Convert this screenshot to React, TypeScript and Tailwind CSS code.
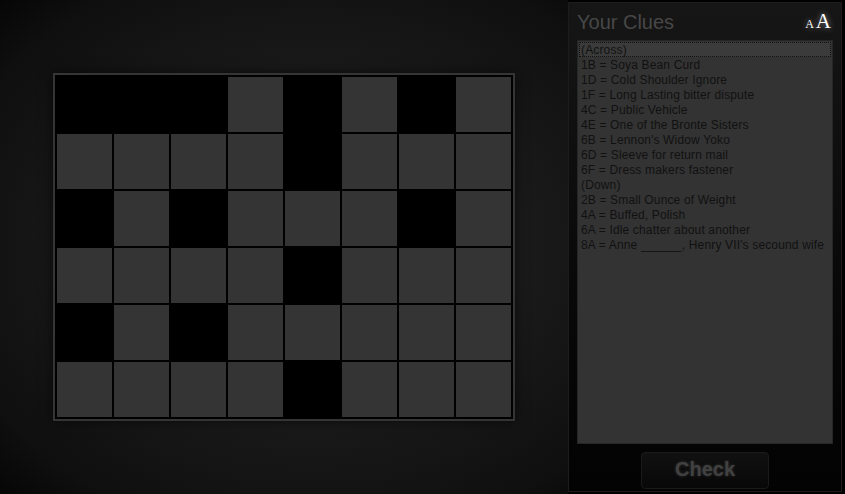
import { useState } from 'react';

const LAYOUT = [
  'BBBWBWBW',
  'WWWWBWWW',
  'BWBWWWBW',
  'WWWWBWWW',
  'BWBWWWWW',
  'WWWWBWWW',
];

const CLUES = [
  '(Across)',
  '1B = Soya Bean Curd',
  '1D = Cold Shoulder Ignore',
  '1F = Long Lasting bitter dispute',
  '4C = Public Vehicle',
  '4E = One of the Bronte Sisters',
  "6B = Lennon's Widow Yoko",
  '6D = Sleeve for return mail',
  '6F = Dress makers fastener',
  '(Down)',
  '2B = Small Ounce of Weight',
  '4A = Buffed, Polish',
  '6A = Idle chatter about another',
  "8A = Anne ______, Henry VII's secound wife",
];

function Board() {
  return (
    <div className="border-2 border-[#353535] bg-black p-[2px] shadow-[0_0_12px_rgba(0,0,0,0.6)]">
      <div className="grid grid-cols-[repeat(8,55px)] grid-rows-[repeat(6,55px)] gap-[2px]">
        {LAYOUT.flatMap((row, r) =>
          row.split('').map((c, i) => (
            <div
              key={`${r}-${i}`}
              className={c === 'W' ? 'bg-[#343434]' : 'bg-black'}
            />
          ))
        )}
      </div>
    </div>
  );
}

function CluePanel() {
  const [active] = useState(0);

  return (
    <aside className="w-[274px] h-[490px] mt-[2px] border border-[#1c1c1c] bg-gradient-to-b from-[#161616] via-[#0a0a0a] to-[#030303] flex flex-col">
      <div className="flex items-end justify-between h-[37px] pl-[8px] pr-[10px]">
        <h2 className="text-[20px] leading-none pb-[8px] text-[#474747] font-['Liberation_Sans',Arial,sans-serif]">
          Your Clues
        </h2>
        <div className="flex items-baseline pb-[8px] font-['Liberation_Serif',serif] text-white [text-shadow:0_0_6px_rgba(255,255,255,0.55)]">
          <span className="text-[12px] leading-none mr-[2px]">A</span>
          <span className="text-[21px] leading-none">A</span>
        </div>
      </div>

      <ul className="mx-[8px] h-[404px] bg-[#333333] border border-[#262626] pt-[1px] px-[1px] font-['Liberation_Sans',Arial,sans-serif] text-[12px] leading-[15px] tracking-[0.15px] text-[#111]">
        {CLUES.map((clue, i) => (
          <li
            key={clue}
            className={
              i === active
                ? 'pl-[1px] border border-dotted border-[#111] bg-[#3b3b3b] h-[15px] leading-[14px]'
                : 'pl-[2px] h-[15px] leading-[16px] whitespace-nowrap'
            }
          >
            {clue}
          </li>
        ))}
      </ul>

      <div className="flex justify-center pt-[8px]">
        <button className="w-[128px] h-[37px] pb-[3px] rounded-[4px] bg-gradient-to-b from-[#111] to-[#080808] border border-[#1a1a1a] text-[20px] font-bold text-[#414141] font-['Liberation_Sans',Arial,sans-serif] [text-shadow:0_0_3px_rgba(90,90,90,0.5)]">
          Check
        </button>
      </div>
    </aside>
  );
}

export default function App() {
  return (
    <div className="w-[845px] h-[494px] flex bg-black overflow-hidden">
      <main className="w-[568px] h-full flex items-center justify-center bg-[radial-gradient(ellipse_at_55%_50%,#222222_0%,#1b1b1b_45%,#0f0f0f_85%,#060606_100%)]">
        <Board />
      </main>
      <CluePanel />
    </div>
  );
}
